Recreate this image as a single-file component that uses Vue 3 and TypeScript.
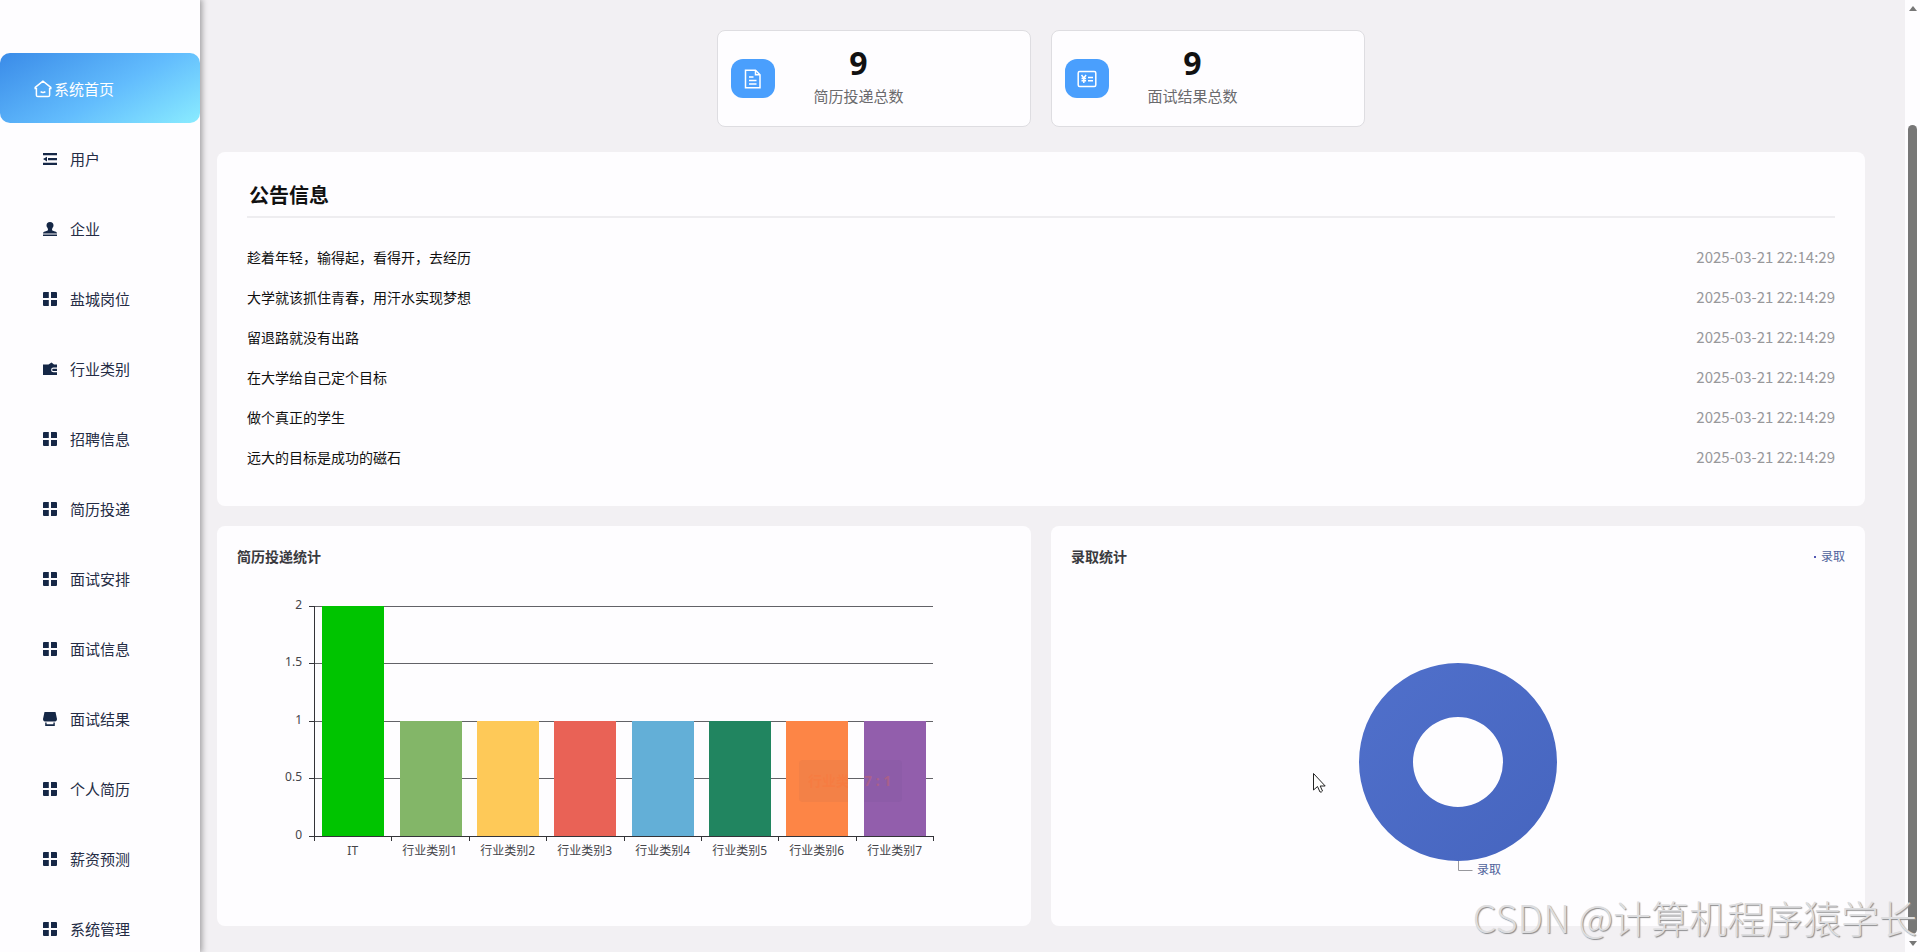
<script setup lang="ts">
interface MenuItem {
  label: string
  icon: 'fold' | 'person' | 'grid' | 'wallet' | 'shop'
}

interface Bar {
  name: string
  value: number
  color: string
}

const menu: MenuItem[] = [
  { label: '用户', icon: 'fold' },
  { label: '企业', icon: 'person' },
  { label: '盐城岗位', icon: 'grid' },
  { label: '行业类别', icon: 'wallet' },
  { label: '招聘信息', icon: 'grid' },
  { label: '简历投递', icon: 'grid' },
  { label: '面试安排', icon: 'grid' },
  { label: '面试信息', icon: 'grid' },
  { label: '面试结果', icon: 'shop' },
  { label: '个人简历', icon: 'grid' },
  { label: '薪资预测', icon: 'grid' },
  { label: '系统管理', icon: 'grid' },
]

const time = '2025-03-21 22:14:29'
const notices: string[] = [
  '趁着年轻，输得起，看得开，去经历',
  '大学就该抓住青春，用汗水实现梦想',
  '留退路就没有出路',
  '在大学给自己定个目标',
  '做个真正的学生',
  '远大的目标是成功的磁石',
]

const bars: Bar[] = [
  { name: 'IT', value: 2, color: '#00c400' },
  { name: '行业类别1', value: 1, color: '#83b668' },
  { name: '行业类别2', value: 1, color: '#fec958' },
  { name: '行业类别3', value: 1, color: '#e96256' },
  { name: '行业类别4', value: 1, color: '#63afd7' },
  { name: '行业类别5', value: 1, color: '#218560' },
  { name: '行业类别6', value: 1, color: '#fd8546' },
  { name: '行业类别7', value: 1, color: '#925eac' },
]

// plot area inside the chart's view box
const plot = { left: 77, right: 696, top: 38, bottom: 268 }
const maxValue = 2
const step = (plot.right - plot.left) / bars.length
const barWidth = 62
const ticks = [0, 0.5, 1, 1.5, 2]

const tickX = (i: number): number => Math.round(plot.left + step * i)
const barX = (i: number): number => Math.ceil(plot.left + step * i + (step - barWidth) / 2)
const valueY = (v: number): number =>
  Math.floor(plot.bottom - ((plot.bottom - plot.top) * v) / maxValue)
</script>

<template>
  <div class="layout">
    <nav class="sidebar" aria-label="主菜单">
      <a class="item active" href="#">
        <svg class="home" viewBox="0 0 18 18" aria-hidden="true">
          <path d="M9 1.2 1.2 7.3V8.4H2.4V15.2a1.4 1.4 0 0 0 1.4 1.4h10.4a1.4 1.4 0 0 0 1.4-1.4V8.4h1.2V7.3Z" />
          <path d="M6.6 11.6q2.4 1.6 4.8 0" />
        </svg>
        <span>系统首页</span>
      </a>
      <a v-for="m in menu" :key="m.label" class="item" href="#">
        <svg class="glyph" viewBox="0 0 14 14" aria-hidden="true">
          <template v-if="m.icon === 'fold'">
            <path d="M0 1h14v2.3H0zM5 6h9v2.3H5zM0 10.8h14v2.3H0zM4 4.7v4.8L0 7.1z" />
          </template>
          <template v-else-if="m.icon === 'person'">
            <path d="M7 0a3.5 3.5 0 0 1 3.5 3.5c0 1.7-1.5 2.5-1.5 4 0 1.3 1 1.5 3 1.9 1.4.3 2 .9 2 2.1H0c0-1.2.6-1.8 2-2.1 2-.4 3-.6 3-1.9 0-1.5-1.5-2.3-1.5-4A3.5 3.5 0 0 1 7 0zM0 12.6h14V14H0z" />
          </template>
          <template v-else-if="m.icon === 'wallet'">
            <path fill-rule="evenodd" d="M0 2.5h5.500L8.500.5l2.500 2H14V5.500h-3.500a2.400 2.400 0 0 0 0 4.800H14V13H0zM10.300 6.800H14v2.300h-3.700a1.150 1.150 0 0 1 0-2.300z" />
          </template>
          <template v-else-if="m.icon === 'shop'">
            <path d="M1.500 0h11L14 7c0 1.600-.8 2.500-2 2.500H2C.8 9.500 0 8.600 0 7zM2.200 10.500h1.400v1.700h6.800v-1.700h1.400V14H2.200z" />
          </template>
          <template v-else>
            <path d="M1 0h4.800v6H0V1a1 1 0 0 1 1-1zM8 0h5a1 1 0 0 1 1 1v5H8zM0 8h5.800v6H1a1 1 0 0 1-1-1zM8 8h6v5a1 1 0 0 1-1 1H8z" />
          </template>
        </svg>
        <span>{{ m.label }}</span>
      </a>
    </nav>

    <main class="content">
      <section class="stats">
        <article class="stat">
          <div class="badge">
            <svg viewBox="0 0 20 20" aria-hidden="true">
              <path d="M2.500 1.200h10l4.500 4.500v13.100H2.500z" />
              <path d="M12.500 1.200v4.500H17" />
              <path d="M6 8h4.500M6 11.500h7.500M6 15h7.500" />
            </svg>
          </div>
          <div class="figures">
            <strong>9</strong>
            <span>简历投递总数</span>
          </div>
        </article>
        <article class="stat">
          <div class="badge">
            <svg viewBox="0 0 20 20" aria-hidden="true">
              <rect x="1.200" y="2.500" width="17.600" height="15" rx="1.500" />
              <path d="m4.500 6 2.300 3 2.300-3M6.800 9v5M4.500 9.500h4.600M4.500 11.700h4.600M11 8.500h5M11 11.800h5" />
            </svg>
          </div>
          <div class="figures">
            <strong>9</strong>
            <span>面试结果总数</span>
          </div>
        </article>
      </section>

      <section class="card notice">
        <h2>公告信息</h2>
        <ul>
          <li v-for="n in notices" :key="n">
            <a href="#">{{ n }}</a>
            <time>{{ time }}</time>
          </li>
        </ul>
      </section>

      <section class="charts">
        <article class="card chart">
          <header><h3>简历投递统计</h3></header>
          <svg class="plot" viewBox="0 0 774 338" role="img" aria-label="简历投递统计">
            <defs>
              <clipPath id="bar-area">
                <rect
                  v-for="(b, i) in bars"
                  :key="b.name"
                  :x="barX(i)"
                  :y="valueY(b.value)"
                  :width="barWidth"
                  :height="plot.bottom - valueY(b.value)"
                />
              </clipPath>
            </defs>
            <g v-for="t in ticks" :key="t">
              <rect class="line" :x="plot.left" :y="valueY(t)" :width="plot.right - plot.left" height="1" />
              <rect class="axis" :x="plot.left - 5" :y="valueY(t)" width="5" height="1" />
              <text class="label end" :x="65" :y="valueY(t) + 3">{{ t }}</text>
            </g>
            <g v-for="(b, i) in bars" :key="b.name">
              <rect
                :x="barX(i)"
                :y="valueY(b.value)"
                :width="barWidth"
                :height="plot.bottom - valueY(b.value)"
                :fill="b.color"
              />
              <text class="label mid" :x="tickX(i) + step / 2" y="287">{{ b.name }}</text>
            </g>
            <rect class="axis" :x="plot.left" :y="plot.top" width="1" :height="plot.bottom - plot.top" />
            <rect class="axis" :x="plot.left" :y="plot.bottom" :width="plot.right - plot.left + 1" height="1" />
            <rect
              v-for="i in bars.length + 1"
              :key="i"
              class="axis"
              :x="tickX(i - 1)"
              :y="plot.bottom"
              width="1"
              height="5"
            />
            <g class="tip" clip-path="url(#bar-area)">
              <rect x="562" y="192" width="103" height="42" rx="4" />
              <text x="571" y="218">行业类别7 : 1</text>
            </g>
          </svg>
        </article>

        <article class="card chart">
          <header>
            <h3>录取统计</h3>
            <span class="legend"><i></i>录取</span>
          </header>
          <svg class="plot" viewBox="0 0 774 338" role="img" aria-label="录取统计">
            <defs>
              <linearGradient id="ring" x1="0" y1="0" x2="1" y2="1">
                <stop offset="0" stop-color="#5070cb" />
                <stop offset="1" stop-color="#4665bf" />
              </linearGradient>
            </defs>
            <path
              fill="url(#ring)"
              fill-rule="evenodd"
              d="M387 95a99 99 0 1 1 0 198a99 99 0 1 1 0-198zM387 149a45 45 0 1 0 0 90a45 45 0 1 0 0-90z"
            />
            <path class="leader" d="M387.500 293v9.500h14" />
            <text class="slice" x="406" y="306">录取</text>
            <path
              class="cursor"
              d="M242.500 205.500v16.500l4-3.500 2.500 5.500q1.500.500 2.500-1l-2.300-5h5z"
            />
          </svg>
        </article>
      </section>
    </main>

    <div class="scrollbar" aria-hidden="true">
      <i class="up"></i>
      <i class="thumb"></i>
      <i class="down"></i>
    </div>

    <div class="watermark">CSDN @计算机程序猿学长</div>
  </div>
</template>

<style>
body {
  margin: 0;
}
</style>

<style scoped>
.layout {
  position: relative;
  display: flex;
  height: 100vh;
  overflow: hidden;
  background: #f2f0f3;
  color: #111;
  font-family: 'Noto Sans', 'Noto Sans CJK SC', sans-serif;
  font-size: 14px;
}

.sidebar {
  z-index: 1;
  box-sizing: border-box;
  width: 200px;
  flex: none;
  padding-top: 53px;
  background: #fefdff;
  box-shadow: 1px 0 6px 1px rgba(0, 0, 0, 0.35);
}

.item {
  display: flex;
  align-items: center;
  gap: 13px;
  box-sizing: border-box;
  height: 70px;
  padding-top: 2px;
  padding-left: 43px;
  border-radius: 10px;
  color: #242c45;
  font-size: 15px;
  line-height: 20px;
  text-decoration: none;
}

.item.active {
  gap: 2px;
  padding-left: 34px;
  background: linear-gradient(150deg, #3a8be8 0%, #62bcfd 55%, #8aecff 100%);
  color: #fff;
}

.home {
  width: 18px;
  height: 18px;
  fill: none;
  stroke: #fff;
  stroke-width: 1.5;
}

.glyph {
  width: 14px;
  height: 14px;
  fill: #152746;
}

.content {
  flex: 1;
  min-width: 0;
  padding: 30px 40px 26px 17px;
}

.stats {
  display: flex;
  justify-content: center;
  gap: 20px;
  margin-bottom: 25px;
}

.stat {
  display: flex;
  align-items: center;
  box-sizing: border-box;
  width: 314px;
  height: 97px;
  padding-left: 13px;
  border: 1px solid #dedde1;
  border-radius: 8px;
  background: #fefdff;
}

.badge {
  display: grid;
  place-items: center;
  width: 44px;
  height: 39px;
  border-radius: 12px;
  background: #4a9ffd;
}

.badge svg {
  width: 20px;
  height: 20px;
  fill: none;
  stroke: #fff;
  stroke-width: 1.5;
}

.figures {
  display: flex;
  flex-direction: column;
  width: 167px;
  text-align: center;
}

.figures strong {
  font-size: 32px;
  line-height: 34px;
}

.figures span {
  color: #6a6a6d;
  font-size: 15px;
  line-height: 32px;
}

.card {
  border-radius: 8px;
  background: #fefdff;
}

.notice {
  margin-bottom: 20px;
  padding: 24px 30px 28px;
}

.notice h2 {
  margin: 0 0 20px;
  padding-left: 2px;
  border-bottom: 2px solid #eeedf0;
  font-size: 20px;
  line-height: 40px;
}

.notice ul {
  margin: 0;
  padding: 0;
  list-style: none;
}

.notice li {
  display: flex;
  align-items: flex-start;
  justify-content: space-between;
  line-height: 40px;
}

.notice a {
  color: #111;
  text-decoration: none;
}

.notice time {
  color: #98989b;
  font-family: 'Noto Sans CJK SC', sans-serif;
  font-size: 15px;
  line-height: 38px;
}

.charts {
  display: grid;
  grid-template-columns: 1fr 1fr;
  gap: 20px;
}

.chart {
  padding: 20px;
}

.chart header {
  display: flex;
  justify-content: space-between;
  line-height: 22px;
}

.chart h3 {
  margin: 0;
  color: #3a3a3e;
  font-size: 14px;
}

.legend {
  display: flex;
  align-items: center;
  gap: 5px;
  color: #50639c;
  font-size: 12px;
  line-height: 20px;
}

.legend i {
  width: 2px;
  height: 2px;
  background: #5359b5;
}

.plot {
  display: block;
  width: 100%;
  height: auto;
}

.line {
  fill: #626267;
}

.axis {
  fill: #333338;
}

.label {
  fill: #444449;
  font-size: 12px;
}

.end {
  text-anchor: end;
}

.mid {
  text-anchor: middle;
}

.tip rect {
  fill: rgba(50, 50, 90, 0.05);
}

.tip text {
  fill: rgba(255, 110, 50, 0.25);
  font-size: 14px;
  font-weight: 700;
}

.leader {
  fill: none;
  stroke: #98989d;
}

.slice {
  fill: #50639c;
  font-size: 12px;
}

.cursor {
  fill: #fff;
  stroke: #222;
}

.scrollbar {
  display: flex;
  flex-direction: column;
  align-items: center;
  gap: 7px;
  box-sizing: border-box;
  width: 15px;
  flex: none;
  padding: 6px 0;
  background: #fefdff;
}

.scrollbar .thumb {
  width: 9px;
  flex: 1;
  margin-top: 107px;
  border-radius: 5px;
  background: #777;
}

.up,
.down {
  border: 4px solid transparent;
}

.up {
  border-top: 0;
  border-bottom: 5px solid #777;
}

.down {
  border-bottom: 0;
  border-top: 5px solid #777;
}

.watermark {
  position: absolute;
  z-index: 2;
  right: 3px;
  bottom: 10px;
  color: #dddddf;
  font-family: 'Noto Sans CJK SC', sans-serif;
  font-size: 38px;
  font-weight: 300;
  line-height: 50px;
  text-shadow: 1px 1px 1px #8c8c8e;
  white-space: nowrap;
  pointer-events: none;
}
</style>
